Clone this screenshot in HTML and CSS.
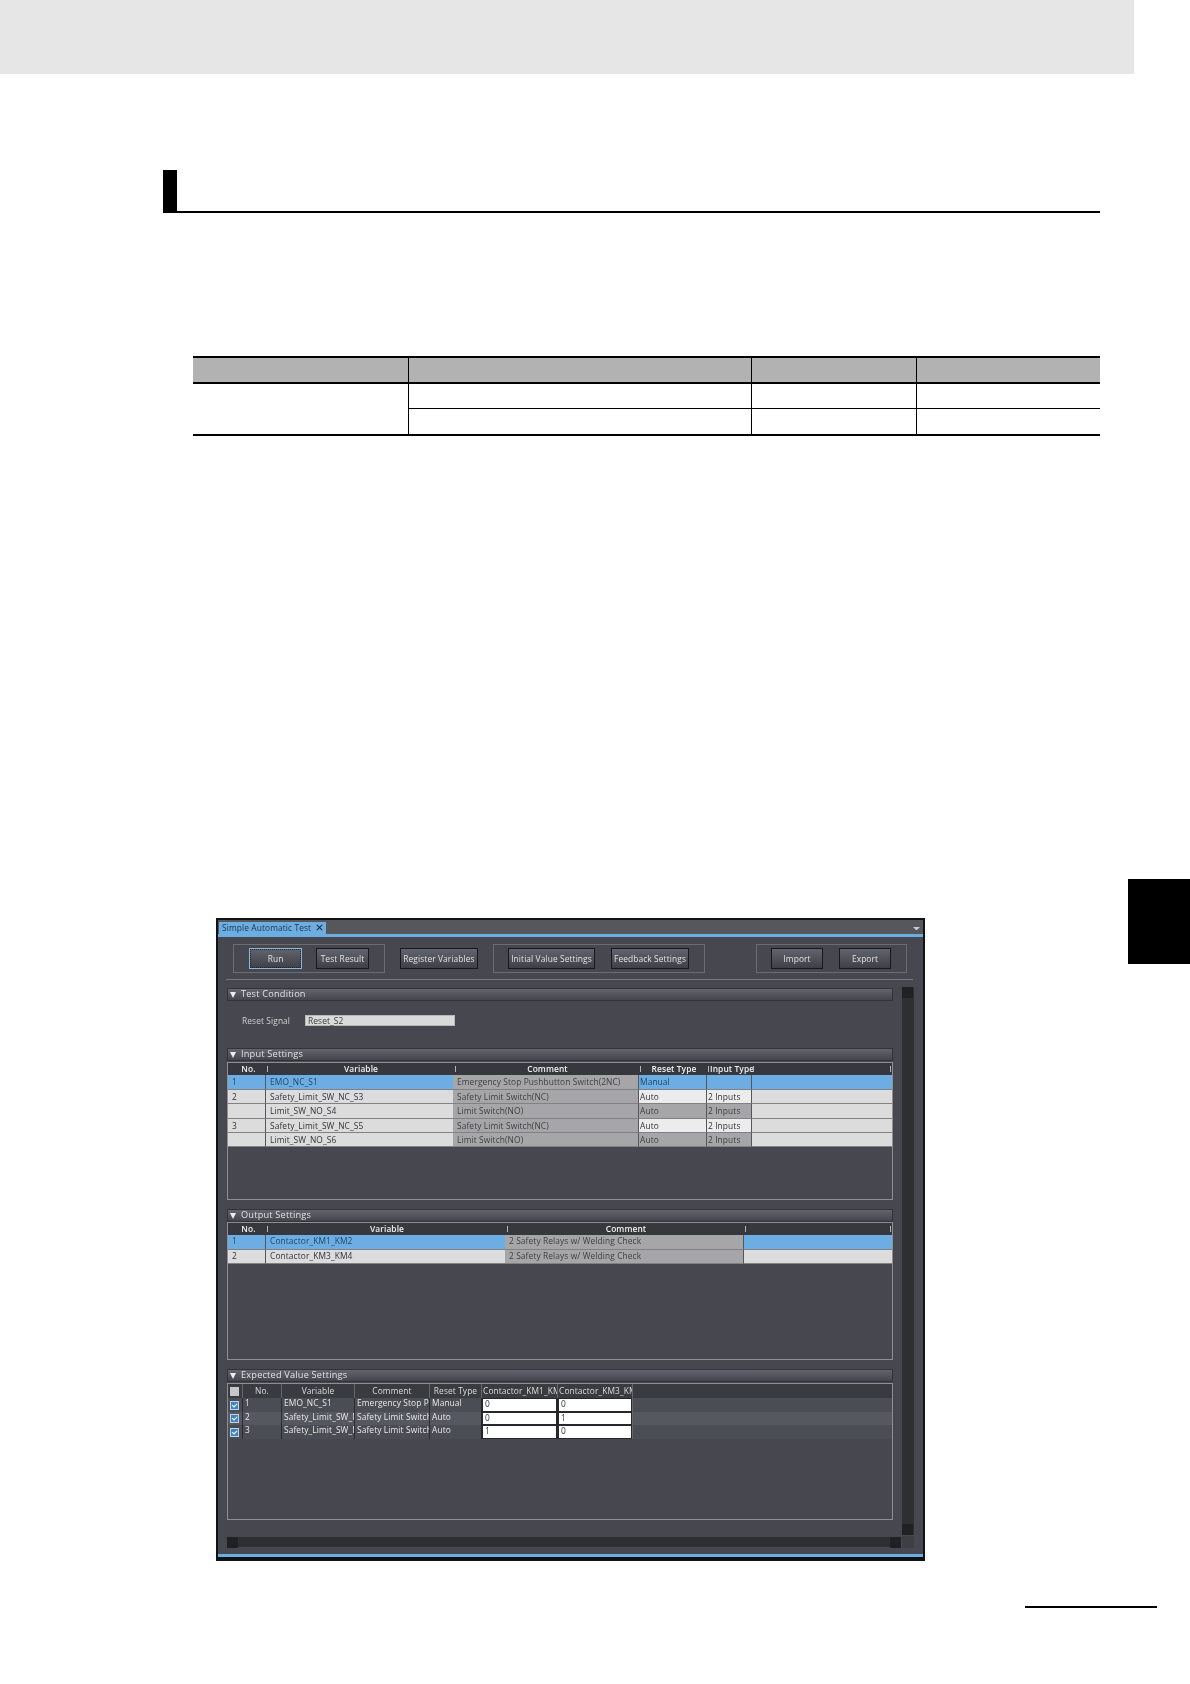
FILE: index.html
```html
<!DOCTYPE html>
<html lang="en">
<head>
<meta charset="utf-8">
<title>Simple Automatic Test</title>
<link rel="stylesheet" href="styles.css">
</head>
<body>
<div class="page">
  <div class="top-band"></div>
  <div class="section-head"></div>

  <table class="spec">
    <colgroup><col class="c1"><col class="c2"><col class="c3"><col class="c4"></colgroup>
    <tr class="spec-head"><th></th><th></th><th></th><th></th></tr>
    <tr><td rowspan="2"></td><td></td><td></td><td></td></tr>
    <tr class="spec-last"><td></td><td></td><td></td></tr>
  </table>

  <div class="window">
    <div class="tabstrip">
      <div class="tab">
        <span>Simple Automatic Test</span>
        <svg class="close" viewBox="0 0 7 7" width="7" height="7"><path d="M.8.8l5.4 5.4M6.2.8L.8 6.2"/></svg>
      </div>
      <span class="menu-arrow"></span>
    </div>

    <div class="toolbar">
      <div class="group g1">
        <button class="btn focus w53">Run</button>
        <button class="btn w53">Test Result</button>
      </div>
      <button class="btn w78 solo">Register Variables</button>
      <div class="group g2">
        <button class="btn w87">Initial Value Settings</button>
        <button class="btn w78">Feedback Settings</button>
      </div>
      <div class="group g3">
        <button class="btn w52">Import</button>
        <button class="btn w52">Export</button>
      </div>
    </div>
    <div class="separator"></div>

    <div class="panes">
      <div class="content">
        <div class="sec-head">Test Condition</div>
        <div class="reset-row">
          <span class="reset-label">Reset Signal</span>
          <span class="reset-input">Reset_S2</span>
        </div>

        <div class="sec-head s-input">Input Settings</div>
        <div class="frame f-input">
          <div class="row thead cols-in">
            <div class="th">No.</div><div class="th">Variable</div><div class="th">Comment</div><div class="th">Reset Type</div><div class="th">Input Type</div><div class="th end"></div>
          </div>
          <div class="row r15 sel cols-in">
            <div class="td">1</div><div class="td div">EMO_NC_S1</div><div class="td cm">Emergency Stop Pushbutton Switch(2NC)</div><div class="td div">Manual</div><div class="td div"></div><div class="td div"></div>
          </div>
          <div class="row r14 cols-in">
            <div class="td">2</div><div class="td div">Safety_Limit_SW_NC_S3</div><div class="td cm">Safety Limit Switch(NC)</div><div class="td div lite">Auto</div><div class="td div lite">2 Inputs</div><div class="td div"></div>
          </div>
          <div class="row r15 cols-in">
            <div class="td"></div><div class="td div">Limit_SW_NO_S4</div><div class="td cm">Limit Switch(NO)</div><div class="td div cm">Auto</div><div class="td div cm">2 Inputs</div><div class="td div"></div>
          </div>
          <div class="row r14 cols-in">
            <div class="td">3</div><div class="td div">Safety_Limit_SW_NC_S5</div><div class="td cm">Safety Limit Switch(NC)</div><div class="td div lite">Auto</div><div class="td div lite">2 Inputs</div><div class="td div"></div>
          </div>
          <div class="row r14 cols-in">
            <div class="td"></div><div class="td div">Limit_SW_NO_S6</div><div class="td cm">Limit Switch(NO)</div><div class="td div cm">Auto</div><div class="td div cm">2 Inputs</div><div class="td div"></div>
          </div>
        </div>

        <div class="sec-head s-output">Output Settings</div>
        <div class="frame f-output">
          <div class="row thead cols-out">
            <div class="th">No.</div><div class="th">Variable</div><div class="th">Comment</div><div class="th end"></div>
          </div>
          <div class="row r15 sel cols-out">
            <div class="td">1</div><div class="td div">Contactor_KM1_KM2</div><div class="td cm">2 Safety Relays w/ Welding Check</div><div class="td div"></div>
          </div>
          <div class="row r14 cols-out">
            <div class="td">2</div><div class="td div">Contactor_KM3_KM4</div><div class="td cm">2 Safety Relays w/ Welding Check</div><div class="td div"></div>
          </div>
        </div>

        <div class="sec-head s-output">Expected Value Settings</div>
        <div class="frame f-expected">
          <div class="row xhead cols-ex">
            <div class="xh"><span class="box grey"></span></div><div class="xh">No.</div><div class="xh">Variable</div><div class="xh">Comment</div><div class="xh">Reset Type</div><div class="xh tight">Contactor_KM1_KM2</div><div class="xh tight">Contactor_KM3_KM4</div><div class="xfill"></div>
          </div>
          <div class="row xrow h14 a cols-ex">
            <div class="xd chk"><svg class="box" viewBox="0 0 9 9" width="9" height="9"><path d="M1.5 4l2.4 2.4L7.8 2.4"/></svg></div><div class="xd">1</div><div class="xd">EMO_NC_S1</div><div class="xd">Emergency Stop Pushbutton Switch(2NC)</div><div class="xd">Manual</div><div class="val">0</div><div class="val">0</div><div class="xfill"></div>
          </div>
          <div class="row xrow h13 b cols-ex">
            <div class="xd chk"><svg class="box" viewBox="0 0 9 9" width="9" height="9"><path d="M1.5 4l2.4 2.4L7.8 2.4"/></svg></div><div class="xd">2</div><div class="xd">Safety_Limit_SW_NC_S3</div><div class="xd">Safety Limit Switch(NC)</div><div class="xd">Auto</div><div class="val">0</div><div class="val">1</div><div class="xfill"></div>
          </div>
          <div class="row xrow h14 a cols-ex">
            <div class="xd chk"><svg class="box" viewBox="0 0 9 9" width="9" height="9"><path d="M1.5 4l2.4 2.4L7.8 2.4"/></svg></div><div class="xd">3</div><div class="xd">Safety_Limit_SW_NC_S5</div><div class="xd">Safety Limit Switch(NC)</div><div class="xd">Auto</div><div class="val">1</div><div class="val">0</div><div class="xfill"></div>
          </div>
        </div>
      </div>

      <div class="vbar">
        <div class="thumb"></div>
        <div class="thumb"></div>
      </div>
    </div>

    <div class="hbar-row">
      <div class="hbar">
        <div class="thumb"></div>
        <div class="thumb"></div>
      </div>
      <div class="corner"></div>
    </div>
    <div class="bottom-line"></div>
  </div>

  <div class="foot-rule"></div>
  <div class="chapter-tab"></div>
</div>
</body>
</html>
```
FILE: styles.css
```css
* { box-sizing: border-box; }
html, body { margin: 0; padding: 0; background: #fff; }
.page {
  position: relative;
  width: 1190px;
  height: 1684px;
  overflow: hidden;
  font-family: "Open Sans", "Liberation Sans", sans-serif;
}

/* Document page */
.top-band { width: 1134px; height: 74px; background: #e6e6e6; }
.section-head {
  margin: 96px 0 0 163px;
  width: 937px;
  height: 43px;
  border-left: 14px solid #000;
  border-bottom: 2px solid #000;
}
.spec {
  margin: 143px 0 0 193px;
  width: 907px;
  height: 80px;
  table-layout: fixed;
  border-collapse: separate;
  border-spacing: 0;
  border-top: 2px solid #000;
  border-bottom: 2px solid #000;
}
.spec .c1 { width: 215px; }
.spec .c2 { width: 343px; }
.spec .c3 { width: 165px; }
.spec .c4 { width: 184px; }
.spec th, .spec td { padding: 0; border-left: 1px solid #000; }
.spec tr > :first-child { border-left: 0; }
.spec th { height: 26px; background: #b2b2b2; border-bottom: 2px solid #000; }
.spec td { height: 25px; }
.spec tr:nth-child(2) td:not([rowspan]) { border-bottom: 1px solid #000; }
.spec tr:nth-child(2) td[rowspan] { border-left: 0; }
.spec .spec-last td:first-child { border-left: 1px solid #000; }
.foot-rule { margin: 45px 0 0 1025px; width: 132px; height: 2px; background: #000; }
.chapter-tab { position: absolute; left: 1128px; top: 879px; width: 62px; height: 85px; background: #000; }

/* Application window */
.window {
  margin: 482px 0 0 216px;
  width: 709px;
  height: 643px;
  border: 2px solid #111317;
  background: #47484f;
  color: #e4e4e4;
  filter: blur(0.4px);
}
.tabstrip {
  position: relative;
  height: 17px;
  background: #55575c;
  border-bottom: 3px solid #6aaee2;
  padding: 2px 0 0 1px;
}
.tab {
  display: flex;
  align-items: center;
  gap: 5px;
  width: 107px;
  height: 12px;
  padding: 0 0 1px 3px;
  background: #6cade2;
  color: #23384c;
  font-size: 8.4px;
  letter-spacing: .1px;
  white-space: nowrap;
}
.close { flex: none; }
.close path { stroke: #1d2b38; stroke-width: 1.05; fill: none; }
.menu-arrow {
  position: absolute;
  right: 3px;
  top: 7px;
  width: 7px;
  border-style: solid;
  border-width: 3px 3.5px 0;
  border-color: #c9cad0 transparent transparent;
}

.toolbar { display: flex; align-items: center; height: 29px; margin-top: 7px; padding-left: 15px; }
.group { display: flex; align-items: center; height: 29px; border: 1px solid #6b6d73; }
.g1 { width: 152px; padding-left: 15px; gap: 14px; }
.g2 { width: 212px; padding-left: 14px; gap: 16px; margin-left: 15px; }
.g3 { width: 151px; padding-left: 14px; gap: 16px; margin-left: 51px; }
.solo { margin-left: 15px; }
.btn {
  height: 21px;
  padding: 0;
  border: 1px solid #17181c;
  background: linear-gradient(#61636e, #3f4047);
  color: #e2e2e2;
  font: 8.4px "Open Sans", "Liberation Sans", sans-serif;
  letter-spacing: .1px;
  white-space: nowrap;
}
.btn.focus { border: 1px solid #8db6d8; outline: 1px dotted #20242a; outline-offset: -2px; }
.w52 { width: 52px; }
.w53 { width: 53px; }
.w78 { width: 78px; }
.w87 { width: 87px; }
.separator { height: 1px; margin: 6px 0 0 8px; width: 687px; background: #77797e; }

.panes { display: flex; height: 548px; margin-top: 7px; padding-left: 9px; }
.content { width: 666px; padding-top: 1px; }
.vbar {
  display: flex;
  flex-direction: column;
  justify-content: space-between;
  width: 12px;
  margin-left: 9px;
  background: #2e2f33;
}
.thumb { flex: none; width: 11px; height: 11px; background: #202125; }

.sec-head {
  position: relative;
  height: 13px;
  padding-left: 13px;
  background: linear-gradient(#62646f, #44454c);
  border: 1px solid #33343a;
  color: #e2e2e2;
  font-size: 9.2px;
  line-height: 10px;
  letter-spacing: .2px;
  white-space: nowrap;
}
.sec-head::before {
  content: "";
  position: absolute;
  left: 2px;
  top: 3px;
  border-style: solid;
  border-width: 6px 3.5px 0;
  border-color: #eee transparent transparent;
}
.reset-row { display: flex; align-items: center; height: 11px; margin-top: 14px; padding-left: 15px; font-size: 8.4px; color: #cfcfd2; letter-spacing: .1px; }
.reset-label { width: 63px; white-space: nowrap; }
.reset-input {
  width: 150px;
  height: 11px;
  padding-left: 2px;
  background: #dadada;
  border: 1px solid #b9b9b9;
  color: #3a3a3a;
  line-height: 9px;
  white-space: nowrap;
}
.s-input { margin-top: 22px; }
.s-output { margin-top: 9px; }

.frame { border: 1px solid #8e8f94; background: #47484f; overflow: hidden; }
.f-input { height: 138px; margin-top: 1px; }
.f-output { height: 138px; }
.f-expected { height: 137px; margin-top: 1px; }
.row { display: grid; font-size: 8.4px; letter-spacing: .1px; }
.cols-in { grid-template-columns: 37px 188px 185px 68px 45px 141px; }
.cols-out { grid-template-columns: 37px 240px 238px 149px; }
.cols-ex { grid-template-columns: 14px 39px 73px 75px 52px 76px 75px 60px; }

.thead { height: 12px; background: #37383d; }
.th {
  position: relative;
  padding-left: 4px;
  text-align: center;
  line-height: 11px;
  font-weight: 600;
  color: #f0f0f0;
  background: linear-gradient(#b4b4b4, #b4b4b4) no-repeat 2px 3px / 1px 6px;
  white-space: nowrap;
}
.th:first-child { background: none; }
.th.end::after { content: ""; position: absolute; right: 1px; top: 3px; width: 1px; height: 6px; background: #b4b4b4; }

.r15 { height: 15px; }
.r14 { height: 14px; }
.r15 .td, .r14 .td { border-bottom: 1px solid #808185; }
.td {
  padding-left: 4px;
  background: #dcdcdd;
  color: #333335;
  line-height: 14px;
  white-space: nowrap;
  overflow: hidden;
}
.cols-in .td:nth-child(4), .cols-in .td:nth-child(5) { padding-left: 1px; }
.cols-out .td { line-height: 12px; }
.td.div { border-left: 1px solid #55565a; }
.td.cm { background: #a6a6a8; color: #404042; }
.td.lite { background: #ececec; }
.sel .td { background: #6caee4; color: #1f4666; }
.sel .td.cm { background: #a6a6a8; color: #404042; }

.xhead { height: 14px; background: #3a3b40; }
.xh {
  display: flex;
  align-items: center;
  justify-content: center;
  padding-bottom: 2px;
  border-left: 1px solid #66676d;
  color: #dcdcde;
  white-space: nowrap;
  overflow: hidden;
}
.xh:first-child { border-left: 0; padding: 0 1px 0 0; }
.xh.tight { justify-content: flex-start; padding-left: 1px; }
.xfill { border-left: 1px solid #66676d; }
.xrow.h14 { height: 14px; }
.xrow.h13 { height: 13px; }
.a { background: #4a4e54; }
.b { background: #555860; }
.xd {
  padding-left: 2px;
  border-left: 1px solid #2b2c30;
  color: #e8e8e8;
  font-weight: 500;
  line-height: 10px;
  white-space: nowrap;
  overflow: hidden;
}
.xd.chk { display: flex; align-items: center; justify-content: center; padding: 0 1px 0 0; border-left: 0; }
.box { display: block; width: 9px; height: 9px; background: #3c84c8; border: 1px solid #c9d3de; }
.box.grey { background: #c6c6c6; border-color: #c6c6c6; }
.box path { stroke: #fff; stroke-width: 1.3; fill: none; }
.val {
  padding-left: 2px;
  background: #fff;
  border: 1px solid #26272b;
  border-left-width: 2px;
  color: #333;
  line-height: 9px;
}

.hbar-row { display: flex; margin-top: 1px; padding-left: 9px; }
.hbar {
  display: flex;
  justify-content: space-between;
  align-items: center;
  width: 674px;
  height: 10px;
  margin-top: 1px;
  background: #2e2f33;
}
.corner { width: 12px; height: 12px; margin-left: 1px; background: #3e3f44; }
.bottom-line { height: 5px; margin-top: 6px; background: #071018; border-top: 3px solid #6aaee2; }
```
